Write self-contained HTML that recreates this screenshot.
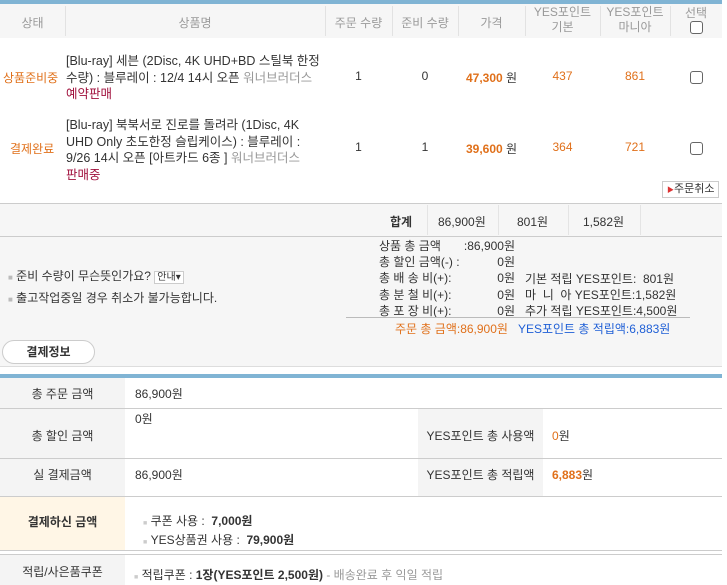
<!DOCTYPE html>
<html><head><meta charset="utf-8"><style>
*{margin:0;padding:0;box-sizing:border-box}
body{width:727px;height:585px;overflow:hidden;background:#fff;font-family:"Liberation Sans","Noto Sans CJK KR",sans-serif;font-size:12px;color:#333;position:relative;letter-spacing:0}
.a{position:absolute;white-space:nowrap}
.c{text-align:center}
.g{color:#999}
.o{color:#e0701a}
.cb{position:absolute;width:13px;height:13px;border:1px solid #666;border-radius:3px;background:#fff}
.hl{position:absolute;height:1px;background:#ccc}
.vl{position:absolute;width:1px;background:#e2e2e2}
.p{font-size:12.5px}
</style></head><body>
<div class="a" style="left:0;top:0;width:722px;height:4px;background:#80b4d4"></div>
<div class="a" style="left:0;top:4px;width:722px;height:34px;background:#f6f6f6"></div>
<div class="vl" style="left:65px;top:6px;height:30px"></div>
<div class="vl" style="left:325px;top:6px;height:30px"></div>
<div class="vl" style="left:392px;top:6px;height:30px"></div>
<div class="vl" style="left:458px;top:6px;height:30px"></div>
<div class="vl" style="left:525px;top:6px;height:30px"></div>
<div class="vl" style="left:600px;top:6px;height:30px"></div>
<div class="vl" style="left:670px;top:6px;height:30px"></div>
<div class="a c g" style="left:0;width:65px;top:14px">상태</div>
<div class="a c g" style="left:65px;width:260px;top:14px">상품명</div>
<div class="a c g" style="left:325px;width:67px;top:14px">주문 수량</div>
<div class="a c g" style="left:392px;width:66px;top:14px">준비 수량</div>
<div class="a c g" style="left:458px;width:67px;top:14px">가격</div>
<div class="a c g" style="left:525px;width:75px;top:5px;line-height:15px">YES포인트<br>기본</div>
<div class="a c g" style="left:600px;width:70px;top:5px;line-height:15px">YES포인트<br>마니아</div>
<div class="a c g" style="left:670px;width:52px;top:4px">선택</div>
<div class="cb" style="left:690px;top:21px"></div>

<div class="a o" style="left:3px;top:69px">상품준비중</div>
<div class="a p" style="left:66px;top:53px;line-height:16.5px">[Blu-ray] 세븐 (2Disc, 4K UHD+BD 스틸북 한정<br>수량) : 블루레이 : 12/4 14시 오픈 <span class="g">워너브러더스</span><br><span style="color:#a0103c">예약판매</span></div>
<div class="a c" style="left:325px;width:67px;top:69px">1</div>
<div class="a c" style="left:392px;width:66px;top:69px">0</div>
<div class="a" style="left:466px;top:69px"><b class="o">47,300</b> 원</div>
<div class="a c o" style="left:525px;width:75px;top:69px">437</div>
<div class="a c o" style="left:600px;width:70px;top:69px">861</div>
<div class="cb" style="left:690px;top:71px"></div>

<div class="a o" style="left:10px;top:140px">결제완료</div>
<div class="a p" style="left:66px;top:117px;line-height:16.5px">[Blu-ray] 북북서로 진로를 돌려라 (1Disc, 4K<br>UHD Only 초도한정 슬립케이스) : 블루레이 :<br>9/26 14시 오픈 [아트카드 6종 ] <span class="g">워너브러더스</span><br><span style="color:#a0103c">판매중</span></div>
<div class="a c" style="left:325px;width:67px;top:140px">1</div>
<div class="a c" style="left:392px;width:66px;top:140px">1</div>
<div class="a" style="left:466px;top:140px"><b class="o">39,600</b> 원</div>
<div class="a c o" style="left:525px;width:75px;top:140px">364</div>
<div class="a c o" style="left:600px;width:70px;top:140px">721</div>
<div class="cb" style="left:690px;top:142px"></div>

<div class="a" style="left:662px;top:181px;width:57px;height:17px;border:1px solid #ccc;font-size:11px;padding-left:4px;line-height:15px"><span style="color:#d33;font-size:7px">▶</span>주문취소</div>

<div class="a" style="left:0;top:203px;width:722px;height:164px;background:#f6f6f6"></div>
<div class="hl" style="left:0;top:203px;width:722px"></div>
<div class="hl" style="left:0;top:236px;width:722px"></div>
<div class="vl" style="left:427px;top:205px;height:30px;background:#e4e4e4"></div>
<div class="vl" style="left:498px;top:205px;height:30px;background:#e4e4e4"></div>
<div class="vl" style="left:568px;top:205px;height:30px;background:#e4e4e4"></div>
<div class="vl" style="left:640px;top:205px;height:30px;background:#e4e4e4"></div>
<div class="a" style="left:390px;top:213px;font-weight:bold">합계</div>
<div class="a" style="left:438px;top:213px">86,900원</div>
<div class="a" style="left:517px;top:213px">801원</div>
<div class="a" style="left:583px;top:213px">1,582원</div>

<div class="a" style="left:8px;top:266px;line-height:20px"><span style="color:#bbb;font-size:8px">■</span> 준비 수량이 무슨뜻인가요? <span style="font-size:10px;border:1px solid #ccc;background:#fff;padding:0 2px">안내▾</span><br><span style="color:#bbb;font-size:8px">■</span> 출고작업중일 경우 취소가 불가능합니다.</div>
<div class="a" style="left:379px;top:238px;line-height:16.2px">상품 총 금액<br>총 할인 금액(-) :<br>총 배 송 비(+):<br>총 분 철 비(+):<br>총 포 장 비(+):</div>
<div class="a" style="left:455px;top:238px;line-height:16.2px;text-align:right;width:60px">:86,900원<br>0원<br>0원<br>0원<br>0원</div>
<div class="a" style="left:525px;top:271px;line-height:16.2px">기본 적립 YES포인트:&nbsp; 801원<br>마&nbsp; 니&nbsp; 아 YES포인트:1,582원<br>추가 적립 YES포인트:4,500원</div>
<div class="hl" style="left:346px;top:317px;width:344px;background:#bbb"></div>
<div class="a" style="left:395px;top:320px"><span class="o">주문 총 금액:86,900원</span>&nbsp;&nbsp; <span style="color:#1f5fd6">YES포인트 총 적립액:6,883원</span></div>
<div class="hl" style="left:0;top:366px;width:722px;background:#ddd"></div>

<div class="a" style="left:2px;top:340px;width:93px;height:24px;border:1px solid #ccc;border-radius:12px;background:#fff;text-align:center;line-height:22px;font-weight:bold;font-size:12px">결제정보</div>

<div class="a" style="left:0;top:374px;width:722px;height:4px;background:#80b4d4"></div>
<div class="a" style="left:0;top:378px;width:125px;height:118px;background:#f4f4f4"></div>
<div class="a" style="left:0;top:496px;width:125px;height:54px;background:#fff6e6"></div>
<div class="a" style="left:418px;top:408px;width:125px;height:88px;background:#f4f4f4"></div>
<div class="a" style="left:0;top:555px;width:125px;height:30px;background:#f4f4f4"></div>
<div class="hl" style="left:0;top:408px;width:722px"></div>
<div class="hl" style="left:0;top:458px;width:722px"></div>
<div class="hl" style="left:0;top:496px;width:722px"></div>
<div class="hl" style="left:0;top:550px;width:722px"></div>
<div class="hl" style="left:0;top:554px;width:722px"></div>

<div class="a c" style="left:0;width:125px;top:385px">총 주문 금액</div>
<div class="a" style="left:135px;top:385px">86,900원</div>
<div class="a c" style="left:0;width:125px;top:427px">총 할인 금액</div>
<div class="a" style="left:135px;top:410px">0원</div>
<div class="a c" style="left:418px;width:125px;top:427px">YES포인트 총 사용액</div>
<div class="a" style="left:552px;top:427px"><span class="o">0</span>원</div>
<div class="a c" style="left:0;width:125px;top:466px">실 결제금액</div>
<div class="a" style="left:135px;top:466px">86,900원</div>
<div class="a c" style="left:418px;width:125px;top:466px">YES포인트 총 적립액</div>
<div class="a" style="left:552px;top:466px"><b class="o">6,883</b>원</div>
<div class="a c" style="left:0;width:125px;top:513px;font-weight:bold">결제하신 금액</div>
<div class="a" style="left:143px;top:513px;line-height:17px"><span style="color:#ccc;font-size:7px">■</span> 쿠폰 사용 :&nbsp; <b>7,000원</b><br><span style="color:#ccc;font-size:7px">■</span> YES상품권 사용 :&nbsp; <b>79,900원</b></div>
<div class="a c" style="left:0;width:125px;top:563px">적립/사은품쿠폰</div>
<div class="a" style="left:134px;top:566px"><span style="color:#ccc;font-size:7px">■</span> 적립쿠폰 : <b>1장(YES포인트 2,500원)</b> <span class="g">- 배송완료 후 익일 적립</span></div>
</body></html>
